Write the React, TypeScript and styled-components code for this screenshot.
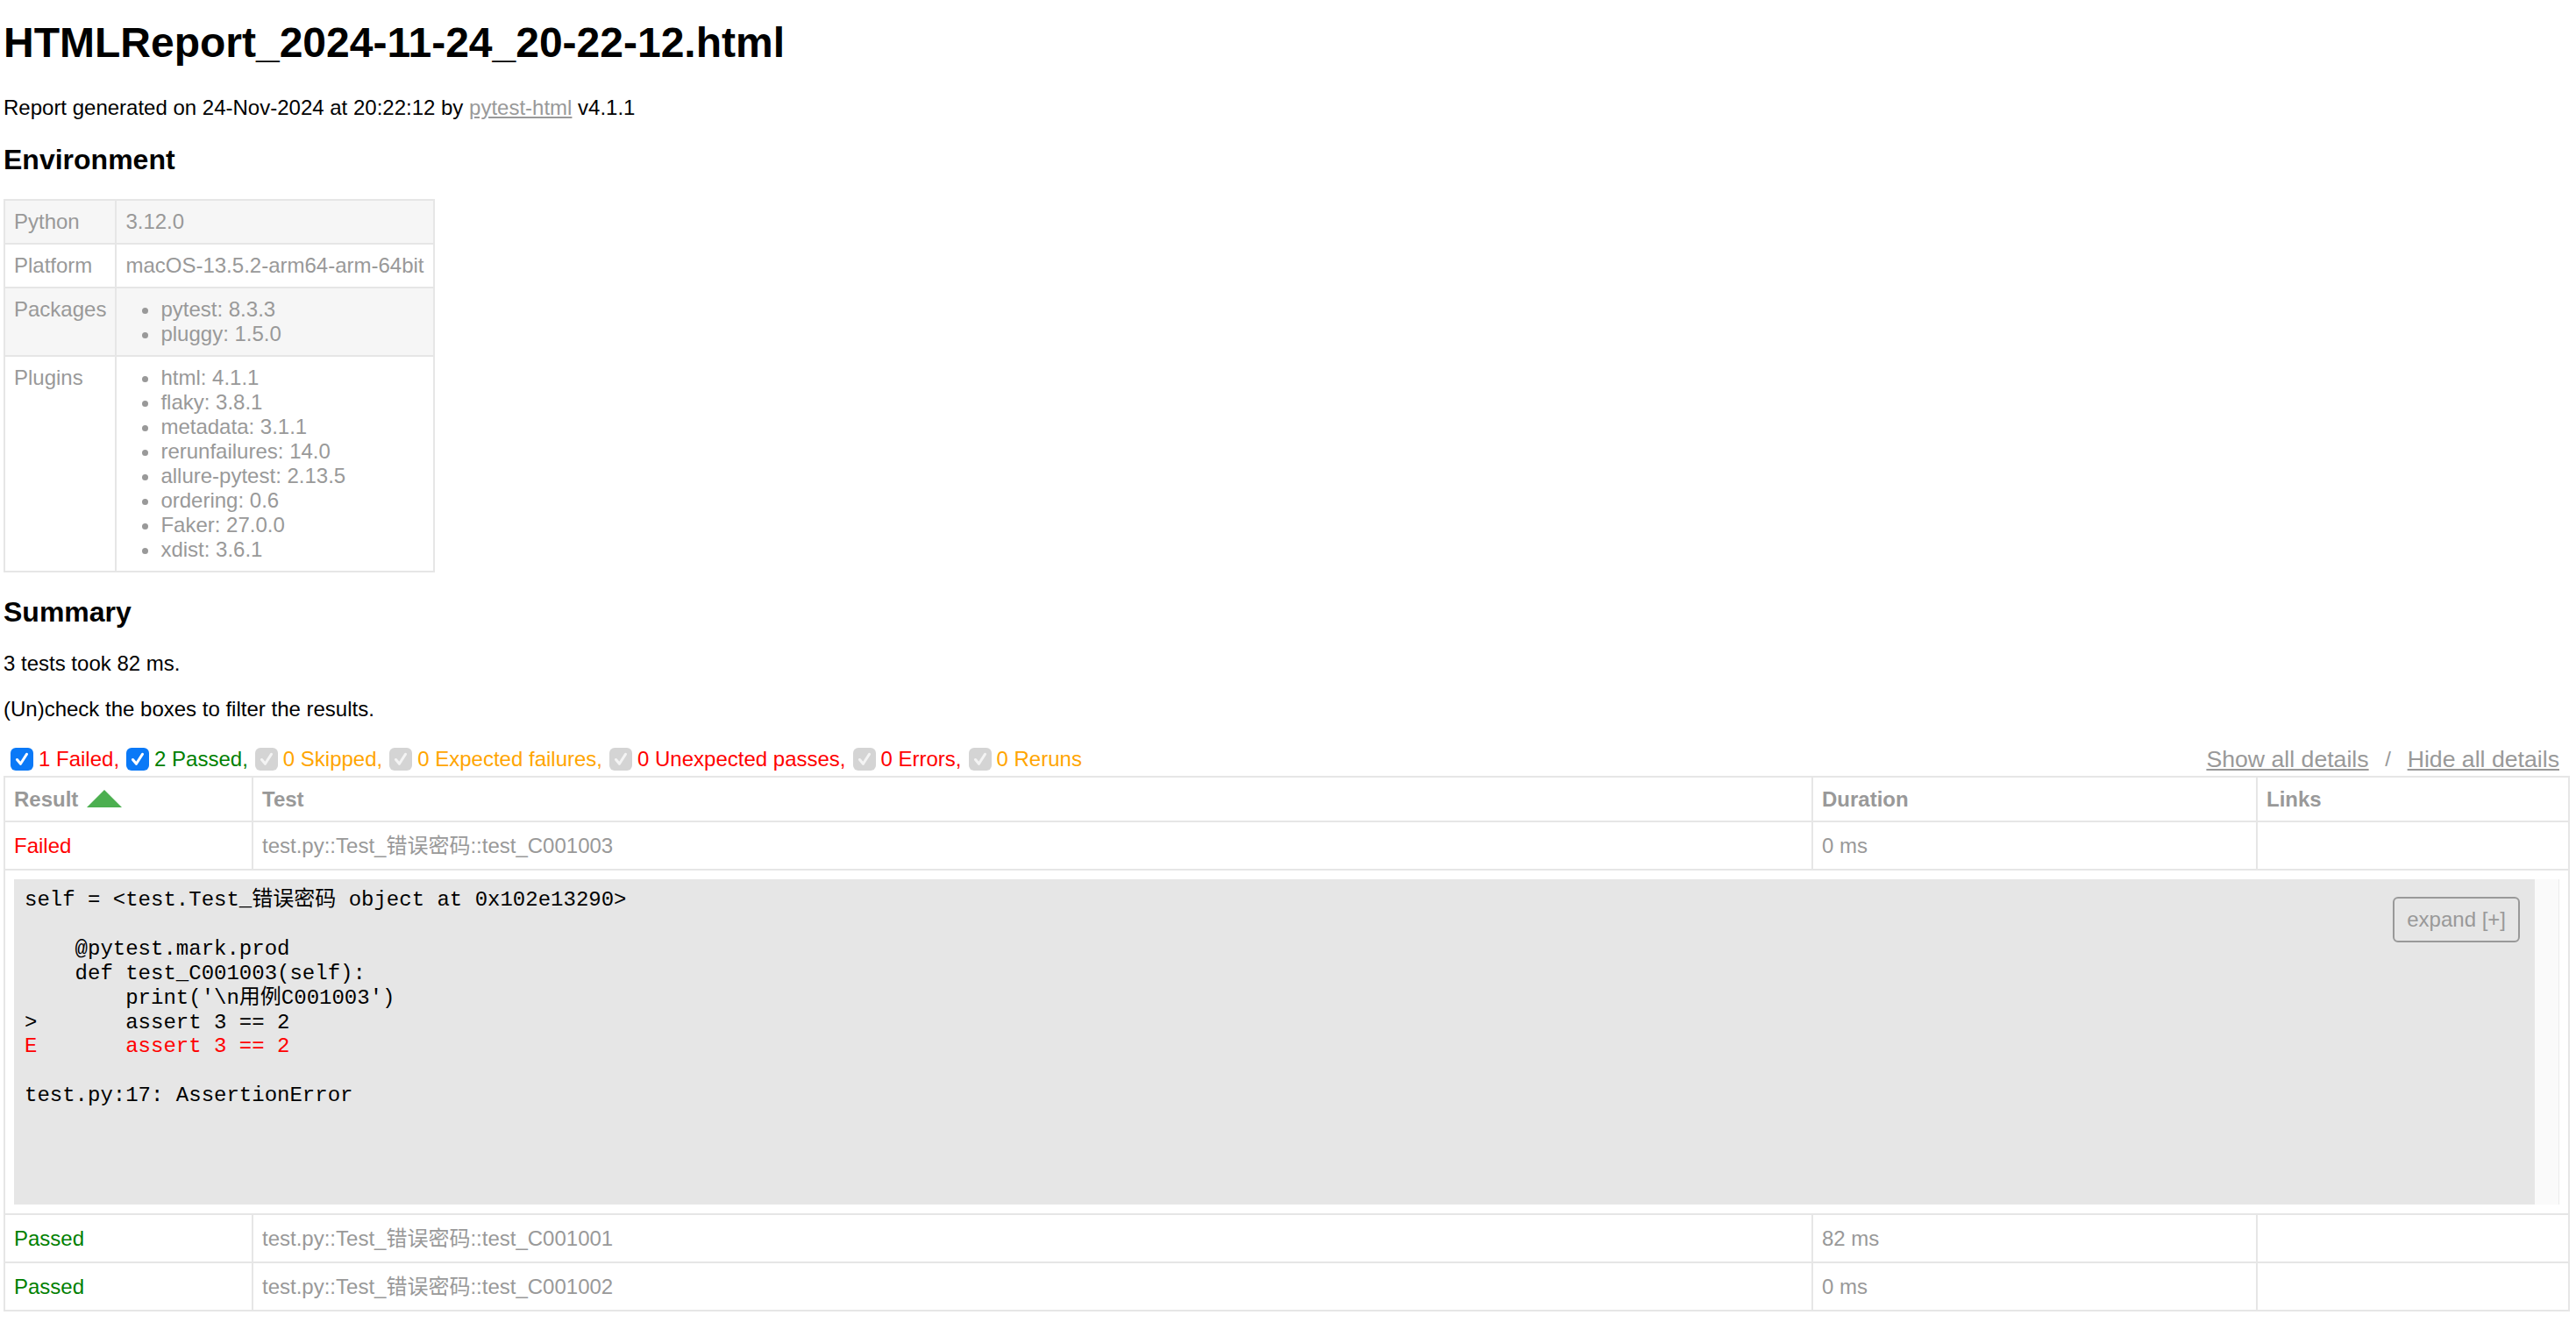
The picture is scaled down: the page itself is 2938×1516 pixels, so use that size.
import styled, { createGlobalStyle } from "styled-components";

const GlobalStyle = createGlobalStyle`
  html, body {
    margin: 0;
    padding: 0;
    background: #fff;
  }
  body {
    font-family: "Liberation Sans", Arial, "Noto Sans CJK SC", sans-serif;
    font-size: 24px;
    color: #999;
  }
`;

type EnvRow = { name: string; value?: string; items?: string[] };

const envRows: EnvRow[] = [
  { name: "Python", value: "3.12.0" },
  { name: "Platform", value: "macOS-13.5.2-arm64-arm-64bit" },
  { name: "Packages", items: ["pytest: 8.3.3", "pluggy: 1.5.0"] },
  {
    name: "Plugins",
    items: [
      "html: 4.1.1",
      "flaky: 3.8.1",
      "metadata: 3.1.1",
      "rerunfailures: 14.0",
      "allure-pytest: 2.13.5",
      "ordering: 0.6",
      "Faker: 27.0.0",
      "xdist: 3.6.1",
    ],
  },
];

const filters = [
  { label: "1 Failed,", color: "red", enabled: true },
  { label: "2 Passed,", color: "green", enabled: true },
  { label: "0 Skipped,", color: "orange", enabled: false },
  { label: "0 Expected failures,", color: "orange", enabled: false },
  { label: "0 Unexpected passes,", color: "red", enabled: false },
  { label: "0 Errors,", color: "red", enabled: false },
  { label: "0 Reruns", color: "orange", enabled: false },
];

const results = [
  { result: "Failed", test: "test.py::Test_错误密码::test_C001003", duration: "0 ms", log: true },
  { result: "Passed", test: "test.py::Test_错误密码::test_C001001", duration: "82 ms", log: false },
  { result: "Passed", test: "test.py::Test_错误密码::test_C001002", duration: "0 ms", log: false },
];

const App = () => {
  return (
    <Page>
      <GlobalStyle />
      <Title>HTMLReport_2024-11-24_20-22-12.html</Title>
      <Para>
        Report generated on 24-Nov-2024 at 20:22:12 by <Link href="#">pytest-html</Link> v4.1.1
      </Para>

      <SectionTitle>Environment</SectionTitle>
      <EnvTable>
        <tbody>
          {envRows.map((row, i) => (
            <EnvTr key={row.name} $odd={i % 2 === 0}>
              <EnvTd>{row.name}</EnvTd>
              <EnvTd>
                {row.items ? (
                  <EnvList>
                    {row.items.map((item) => (
                      <li key={item}>{item}</li>
                    ))}
                  </EnvList>
                ) : (
                  row.value
                )}
              </EnvTd>
            </EnvTr>
          ))}
        </tbody>
      </EnvTable>

      <SectionTitle>Summary</SectionTitle>
      <Para>3 tests took 82 ms.</Para>
      <Para>(Un)check the boxes to filter the results.</Para>

      <Controls>
        <Filters>
          {filters.map((f) => (
            <FilterItem key={f.label}>
              <CheckBox $disabled={!f.enabled}>
                <svg viewBox="0 0 20 20">
                  <polyline
                    points="5,10.5 8.6,14.8 15,4.8"
                    fill="none"
                    stroke={f.enabled ? "#fff" : "#f4f4f4"}
                    strokeWidth="2.8"
                    strokeLinecap="round"
                    strokeLinejoin="round"
                  />
                </svg>
              </CheckBox>
              <FilterLabel $color={f.color}>{f.label}</FilterLabel>
            </FilterItem>
          ))}
        </Filters>
        <Collapse>
          <LinkButton>Show all details</LinkButton>
          <Slash>{"\u00a0/\u00a0"}</Slash>
          <LinkButton>Hide all details</LinkButton>
        </Collapse>
      </Controls>

      <ResultsTable>
        <colgroup>
          <col style={{ width: 283 }} />
          <col style={{ width: 1779 }} />
          <col style={{ width: 507 }} />
          <col />
        </colgroup>
        <thead>
          <tr>
            <Th>
              Result
              <SortArrow />
            </Th>
            <Th>Test</Th>
            <Th>Duration</Th>
            <Th>Links</Th>
          </tr>
        </thead>
        {results.map((r) => (
          <tbody key={r.test}>
            <tr>
              <Td $color={r.result === "Failed" ? "red" : "green"}>{r.result}</Td>
              <Td>{r.test}</Td>
              <Td>{r.duration}</Td>
              <Td />
            </tr>
            {r.log && (
              <tr>
                <ExtraTd colSpan={4}>
                  <LogWrapper>
                    <LogBody>
                      <Expander>expand [+]</Expander>
                      <Log>
                        {"self = <test.Test_错误密码 object at 0x102e13290>\n\n"}
                        {"    @pytest.mark.prod\n"}
                        {"    def test_C001003(self):\n"}
                        {"        print('\\n用例C001003')\n"}
                        {">       assert 3 == 2\n"}
                        <ErrorLine>{"E       assert 3 == 2"}</ErrorLine>
                        {"\n\ntest.py:17: AssertionError"}
                      </Log>
                    </LogBody>
                    <ScrollTrack />
                  </LogWrapper>
                </ExtraTd>
              </tr>
            )}
          </tbody>
        ))}
      </ResultsTable>
    </Page>
  );
};

export default App;

const Page = styled.div`
  padding: 0 7px 20px 4px;
`;

const Title = styled.h1`
  font-size: 48px;
  font-weight: bold;
  color: #000;
  margin: 21px 0 33px;
`;

const Para = styled.p`
  color: #000;
  margin: 24px 0;
`;

const Link = styled.a`
  color: #999;
`;

const SectionTitle = styled.h2`
  font-size: 32px;
  font-weight: bold;
  color: #000;
  margin: 26.5px 0;
`;

const EnvTable = styled.table`
  border-collapse: collapse;
`;

const EnvTr = styled.tr<{ $odd?: boolean }>`
  background-color: ${({ $odd }) => ($odd ? "#f6f6f6" : "#fff")};
`;

const EnvTd = styled.td`
  padding: 10px;
  border: 2px solid #e6e6e6;
  vertical-align: top;
`;

const EnvList = styled.ul`
  margin: 0;
  padding: 0 40px;
`;

const Controls = styled.div`
  display: flex;
  justify-content: space-between;
  align-items: center;
`;

const Filters = styled.div`
  display: flex;
  align-items: center;
`;

const FilterItem = styled.label`
  display: inline-flex;
  align-items: center;
`;

const CheckBox = styled.span<{ $disabled?: boolean }>`
  display: inline-flex;
  align-items: center;
  justify-content: center;
  width: 26px;
  height: 26px;
  border-radius: 6px;
  margin: 6px 6px 6px 8px;
  background: ${({ $disabled }) => ($disabled ? "#d4d4d4" : "#0a79f7")};

  svg {
    width: 22px;
    height: 22px;
  }
`;

const FilterLabel = styled.span<{ $color: string }>`
  color: ${({ $color }) => $color};
`;

const Collapse = styled.div`
  display: flex;
  align-items: center;
`;

const LinkButton = styled.button`
  font-family: "Liberation Sans", Arial, sans-serif;
  font-size: 26.67px;
  color: #999;
  border: none;
  background: none;
  padding: 2px 12px;
  text-decoration: underline;
  cursor: pointer;
`;

const Slash = styled.span`
  font-size: 24px;
  color: #999;
`;

const ResultsTable = styled.table`
  border-collapse: collapse;
  border: 2px solid #e6e6e6;
  table-layout: fixed;
  width: 100%;
  color: #999;
  font-size: 24px;
`;

const Th = styled.th`
  padding: 10px;
  border: 2px solid #e6e6e6;
  text-align: left;
  font-weight: bold;
  line-height: 29px;
`;

const SortArrow = styled.span`
  display: inline-block;
  width: 0;
  height: 0;
  margin-left: 10px;
  border-left: 20px solid transparent;
  border-right: 20px solid transparent;
  border-bottom: 20px solid #4caf50;
  vertical-align: -1px;
`;

const Td = styled.td<{ $color?: string }>`
  padding: 10px;
  border: 2px solid #e6e6e6;
  text-align: left;
  line-height: 33px;
  color: ${({ $color }) => $color || "#999"};
  white-space: nowrap;
`;

const ExtraTd = styled.td`
  padding: 10px;
  border: 2px solid #e6e6e6;
`;

const LogWrapper = styled.div`
  display: flex;
  height: 371px;
`;

const LogBody = styled.div`
  position: relative;
  flex: 1;
  background-color: #e6e6e6;
  overflow: hidden;
`;

const Expander = styled.div`
  position: absolute;
  top: 20px;
  right: 17px;
  padding: 10px 14px;
  border: 2px solid #999;
  border-radius: 6px;
  color: #999;
  font-size: 24px;
  line-height: 27.6px;
`;

const Log = styled.pre`
  margin: 0;
  padding: 10px 160px 0 12px;
  color: #000;
  font-family: "Liberation Mono", "Courier New", "Noto Sans CJK SC", monospace;
  font-size: 24px;
  line-height: 27.9px;
  white-space: pre-wrap;
`;

const ErrorLine = styled.span`
  color: red;
`;

const ScrollTrack = styled.div`
  width: 27px;
  background: #fafafa;
  border-right: 1px solid #ebebeb;
`;
